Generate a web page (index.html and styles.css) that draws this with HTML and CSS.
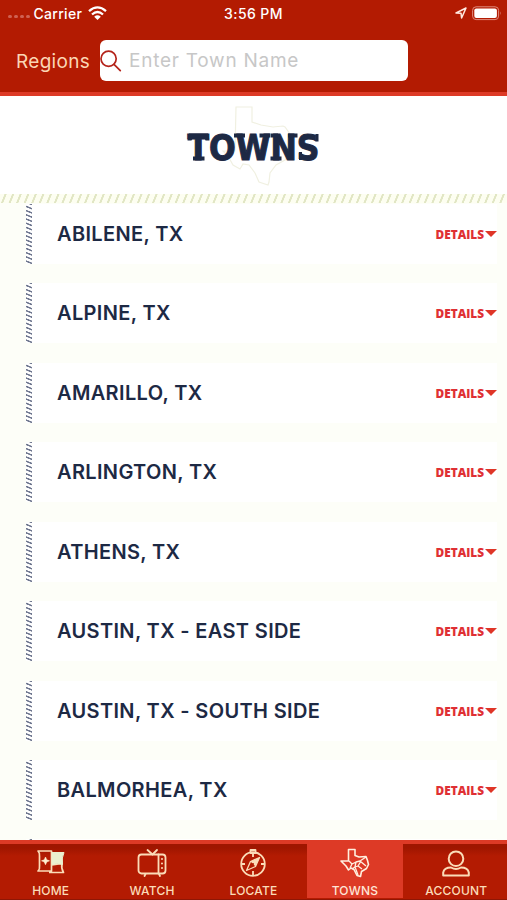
FILE: index.html
```html
<!DOCTYPE html>
<html lang="en">
<head>
<meta charset="utf-8">
<title>Towns</title>
<link rel="stylesheet" href="styles.css">
</head>
<body>
<div class="app">
  <header class="top">
    <div class="status">
      <div class="carrier"><span class="dots"><i></i><i></i><i></i><i></i></span><span>Carrier</span>
        <svg class="wifi" width="19" height="15" viewBox="0 0 19 15"><path d="M1 5.200Q9.500 -2.400 18 5.200M4 8.500Q9.500 3.500 15 8.500" fill="none" stroke="#fff" stroke-width="2.300"/><path d="M6.200 10.700Q9.500 8 12.800 10.700L9.500 14z" fill="#fff"/></svg>
      </div>
      <div class="time">3:56 PM</div>
      <div class="power">
        <svg width="12" height="12" viewBox="0 0 12 12"><path d="M1 6 11 1 6.600 11 6 6.200z" fill="none" stroke="#ffe9e0" stroke-width="1.500" stroke-linejoin="round"/></svg>
        <svg width="30" height="15" viewBox="0 0 30 15"><rect x=".6" y=".8" width="26" height="12.800" rx="3.500" fill="none" stroke="#e08a7c"/><rect x="2.300" y="2.500" width="22.600" height="9.400" rx="2" fill="#fff"/><path d="M28.300 5.200q1.500 2 0 4z" fill="#e08a7c"/></svg>
      </div>
    </div>
    <div class="searchbar">
      <span class="regions">Regions</span>
      <div class="field">
        <svg width="22" height="22" viewBox="0 0 22 22" fill="none" stroke="#b4231a" stroke-width="1.700" stroke-linecap="round"><circle cx="8.600" cy="8.700" r="7.600"/><path d="m14 14.300 6.300 6.300"/></svg>
        <span class="placeholder">Enter Town Name</span>
      </div>
    </div>
  </header>
  <section class="hero">
    <svg width="171" height="98" viewBox="0 0 171 98">
      <path d="M68 11h16v15l9 3 12 2 10-1 2 1 5 7 1 18-6 8-9 5-6 8-1 9-1 3-9-3-4-9-6-8-6-1-3 5-7-4-5-9-5-5h12z" fill="none" stroke="#f0f0e1" stroke-width="1.200"/>
      <text class="title" x="19.500" y="64" textLength="132" lengthAdjust="spacingAndGlyphs">TOWNS</text>
      <path class="slab" d="M21 37.500h19l1.500 7h-4l-1-3H25l-1.500 3h-4zM25 60.500h11.500v4H25zM66 37.500h11v4H66zM91.500 37.500h11v4h-11zM103 37.500h7v4h-7zM120 37.500h9.500v4H120zM102.500 60.500h11v4h-11zM131 56h3v8h-3zM147.500 38h3v7.500h-3z"/>
    </svg>
  </section>
  <div class="hatch"></div>
  <main class="list">
    <div class="row"><span class="name">ABILENE, TX</span><span class="details">DETAILS<i></i></span></div>
    <div class="row"><span class="name">ALPINE, TX</span><span class="details">DETAILS<i></i></span></div>
    <div class="row"><span class="name">AMARILLO, TX</span><span class="details">DETAILS<i></i></span></div>
    <div class="row"><span class="name">ARLINGTON, TX</span><span class="details">DETAILS<i></i></span></div>
    <div class="row"><span class="name">ATHENS, TX</span><span class="details">DETAILS<i></i></span></div>
    <div class="row"><span class="name">AUSTIN, TX - EAST SIDE</span><span class="details">DETAILS<i></i></span></div>
    <div class="row"><span class="name">AUSTIN, TX - SOUTH SIDE</span><span class="details">DETAILS<i></i></span></div>
    <div class="row"><span class="name">BALMORHEA, TX</span><span class="details">DETAILS<i></i></span></div>
    <div class="row"></div>
  </main>
  <nav class="tabs">
    <div class="tab">
      <svg width="30" height="30" viewBox="0 0 30 30" fill="none" stroke="#fbdcb8" stroke-width="1.700" stroke-linejoin="round"><path d="M2 3h13.500v20H2q2-2 1.500-5V8Q4 5 2 3zM13 24.500h14.500q-2.500-4-1.500-9l-10 1.500"/><path d="M16 4.500h12q-2.500 5-1.500 12l-5-1-5.500 1z" fill="#eaf0cf" stroke="#eaf0cf" stroke-width="1"/><path d="m9.500 9 1.200 2.800 2.800 1-2.800 1.200-1.200 2.700-1.200-2.700-2.800-1.200 2.800-1z" fill="#fff0d0" stroke="#fff0d0" stroke-width=".6"/></svg>
      <span>HOME</span>
    </div>
    <div class="tab">
      <svg width="30" height="30" viewBox="0 0 30 30" fill="none" stroke="#fbdcb8" stroke-width="1.800" stroke-linecap="round" stroke-linejoin="round"><rect x="1.500" y="6.500" width="27" height="19" rx="3"/><path d="m10.500 2 5 4.500 4.500-4.500M21.500 6.500v19M8.500 26 7.500 28M22 26l1 2"/><path d="M25 11v.1M25 15.500v.1M25 20v.1" stroke-width="2"/></svg>
      <span>WATCH</span>
    </div>
    <div class="tab">
      <svg width="30" height="30" viewBox="0 0 30 30" fill="none" stroke="#fbdcb8" stroke-width="1.800" stroke-linejoin="round"><circle cx="15" cy="16" r="11.800"/><path d="M12.500 2h5v3h-5zM15 5v4M15 23v5M3 16h4M23 16h4"/><path d="m21.500 9.500-4 9-9 4 4-9z" stroke-width="1.300"/><path d="m21.500 9.500-9 4 5 5z" fill="#fbdcb8" stroke="none"/><circle cx="15" cy="16" r="1" fill="#b31b02" stroke="none"/></svg>
      <span>LOCATE</span>
    </div>
    <div class="tab active">
      <svg width="30" height="30" viewBox="0 0 30 30" fill="none" stroke="#fff0df" stroke-width="1.600" stroke-linejoin="round"><path d="M8.500 1.500H15v6l4 1.500 7-.5 1.500 4 1 4-2 4-5 3-1 5-3.500-1-3-6-3-1.500-2.500 2L6 18 1 13h7.500z"/><path d="M9 13l3 3 4-2 4-1 6-4M12 16l-2 4M16 14l-1 5-3 2M21 13l-3 5 4 3M18 18l-3 1 3 8M20 13l6 5" stroke-width="1.300"/></svg>
      <span>TOWNS</span>
    </div>
    <div class="tab">
      <svg width="30" height="30" viewBox="0 0 30 30" fill="none" stroke="#fbdcb8" stroke-width="2" stroke-linejoin="round"><circle cx="15" cy="10.700" r="7.300"/><path d="M2.200 27.500v-3q1-5 7.800-5 5 3 10 0 6.800 0 7.800 5v3z"/></svg>
      <span>ACCOUNT</span>
    </div>
  </nav>
</div>
</body>
</html>
```

FILE: styles.css
```css
* { box-sizing: border-box; }
body { margin: 0; font-family: Inter, "Liberation Sans", sans-serif; }
.app { width: 507px; height: 900px; display: flex; flex-direction: column; overflow: hidden; background: #fdfef8; }
.top { flex: none; height: 96px; background: #b31b02; border-bottom: 4px solid #dd3a26; color: #fff; }
.status { height: 26px; display: grid; grid-template-columns: 1fr auto 1fr; align-items: center; padding: 0 8px; font-size: 14px; font-weight: 500; }
.carrier { display: flex; align-items: center; letter-spacing: .3px; }
.dots { display: flex; gap: 2.500px; margin: 7px 4px 0 0; }
.dots i { width: 3.500px; height: 3.500px; border-radius: 50%; background: #cf6152; }
.wifi { margin-left: 6px; }
.time { letter-spacing: .4px; }
.power { display: flex; gap: 5px; justify-content: flex-end; align-items: center; margin-right: -3px; }
.searchbar { display: flex; align-items: center; padding: 14px 0 0 16px; }
.regions { width: 84px; font-size: 19px; letter-spacing: .3px; color: #fbd6b4; white-space: nowrap; padding-top: 1px; }
.field { width: 308px; height: 41px; border-radius: 6px; background: #fff; display: flex; align-items: center; gap: 7px; }
.placeholder { color: #c7c7c7; font-size: 19px; letter-spacing: .75px; white-space: nowrap; }
.hero { flex: none; height: 98px; background: #fff; display: flex; justify-content: center; }
.title { font-family: "DejaVu Sans Condensed", "DejaVu Sans", sans-serif; font-stretch: condensed; font-size: 36px; font-weight: 700; fill: #1d2944; stroke: #1d2944; stroke-width: 1px; }
.slab { fill: #1d2944; }
.hatch { flex: none; height: 9px; background: repeating-linear-gradient(112deg, #fdfef1 0 4px, #e1e6c4 4.500px 6px, #fdfef1 6.500px 7px); }
.list { flex: 1; min-height: 0; overflow: hidden; padding: .9px 10px 0 26px; display: flex; flex-direction: column; gap: 19.450px; }
.row { flex: none; height: 60px; display: flex; align-items: center; justify-content: space-between; background: #fff; padding-left: 31px; position: relative; }
.row::before { content: ""; position: absolute; left: 0; top: 0; width: 6px; height: 100%; background: repeating-linear-gradient(22deg, #fff 0 1.700px, #6f778f 2.300px 3.200px, #fff 3.800px 3.900px); }
.name { font-size: 20px; font-weight: 600; letter-spacing: .35px; color: #1d2944; white-space: nowrap; }
.details { display: flex; align-items: center; font: 800 11.800px "Open Sans", sans-serif; color: #df3034; }
.details i { border: 6px solid transparent; border-top: 6px solid #df3526; border-bottom: 0; margin-left: 1px; }
.tabs { flex: none; height: 60px; display: grid; grid-template-columns: repeat(5, 1fr); background: linear-gradient(#9f1600 4px, #b31b02 12px); border-top: 4px solid #dd3a26; box-shadow: inset 0 -1px #8e1705; }
.tab { display: flex; flex-direction: column; align-items: center; padding-top: 4px; color: #fbdcb8; font-size: 12px; font-weight: 500; }
.tab span { margin-top: 5px; line-height: 15px; letter-spacing: .2px; }
.active { background: #dd3a26; color: #ffe6d8; margin: 0 2.500px 2px; }
```
